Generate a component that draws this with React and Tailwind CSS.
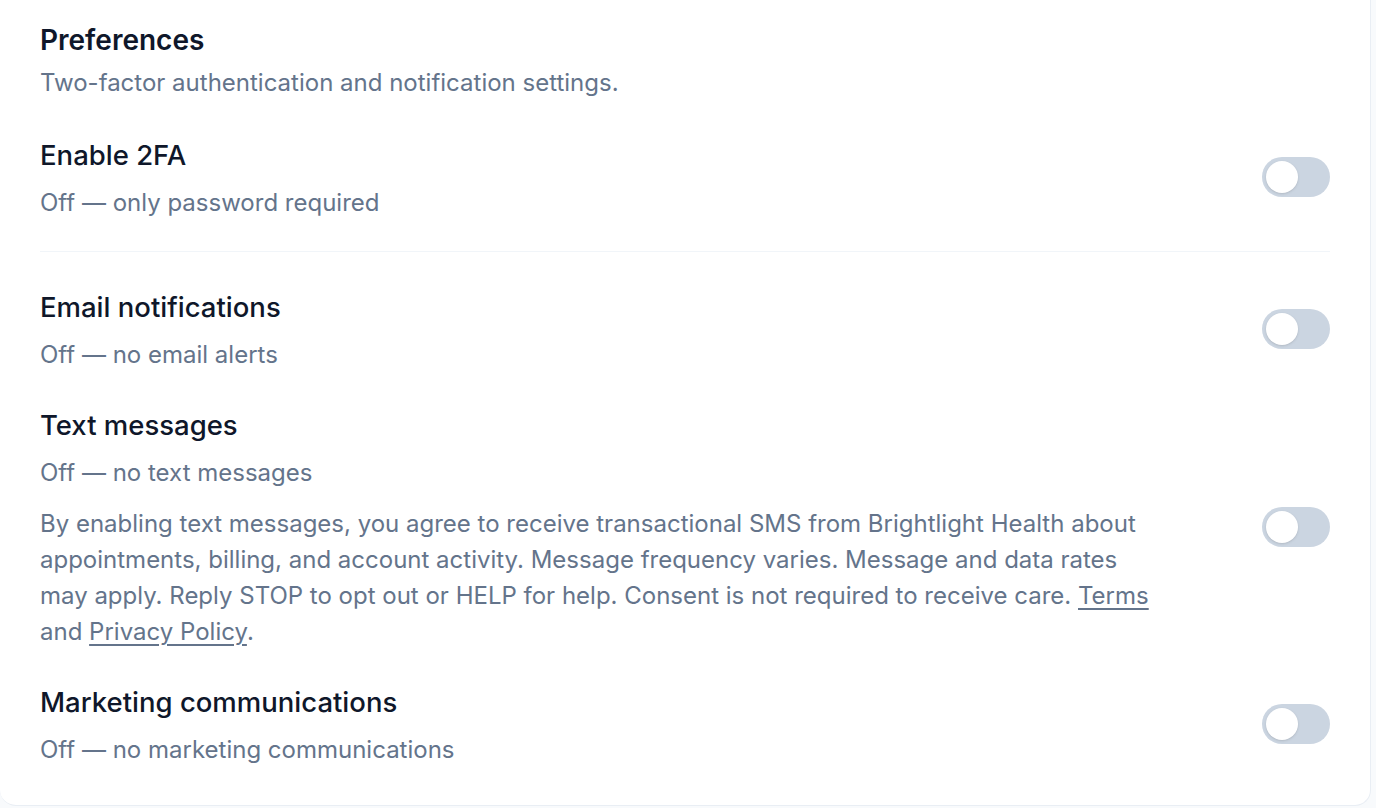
import React, { useState } from "react";

function Toggle({ checked, onChange }) {
  return (
    <button
      type="button"
      role="switch"
      aria-checked={checked}
      onClick={() => onChange(!checked)}
      className={
        "mb-1 flex h-10 w-[68px] shrink-0 items-center rounded-full p-1 transition-colors " +
        (checked ? "bg-blue-600" : "bg-[#cbd5e1]")
      }
    >
      <span
        className={
          "block h-8 w-8 rounded-full bg-white shadow-sm transition-transform " +
          (checked ? "translate-x-7" : "translate-x-0")
        }
      />
    </button>
  );
}

function SettingRow({ title, status, children, checked, onChange }) {
  return (
    <div className="flex items-center justify-between gap-9">
      <div className="min-w-0 flex-1">
        <div className="text-[27.5px] leading-9 font-medium text-[#0f172a]">{title}</div>
        <div className="mt-3 text-[24px] leading-9 text-[#64748b]">{status}</div>
        {children}
      </div>
      <Toggle checked={checked} onChange={onChange} />
    </div>
  );
}

export default function App() {
  const [twoFa, setTwoFa] = useState(false);
  const [email, setEmail] = useState(false);
  const [sms, setSms] = useState(false);
  const [marketing, setMarketing] = useState(false);

  return (
    <div
      className="h-[808px] w-full overflow-hidden bg-[#f8fafc]"
      style={{ fontFamily: "Inter, 'Noto Sans', sans-serif" }}
    >
      <div className="h-[806px] w-[1371px] rounded-b-2xl border-r border-b border-[#e9eef4] bg-white px-10 pt-[22px]">
        <h2 className="text-[28px] leading-9 font-semibold text-[#0f172a]">Preferences</h2>
        <p className="mt-[7px] text-[24px] leading-9 text-[#64748b]">
          Two-factor authentication and notification settings.
        </p>

        <div className="mt-9">
          <SettingRow
            title="Enable 2FA"
            status={twoFa ? "On — code required at sign-in" : "Off — only password required"}
            checked={twoFa}
            onChange={setTwoFa}
          />
        </div>

        <div className="mt-[30px] h-px bg-[#f1f5f9]" />

        <div className="mt-[37px] flex flex-col gap-[34px]">
          <SettingRow
            title="Email notifications"
            status={email ? "On — email alerts enabled" : "Off — no email alerts"}
            checked={email}
            onChange={setEmail}
          />
          <SettingRow
            title="Text messages"
            status={sms ? "On — text messages enabled" : "Off — no text messages"}
            checked={sms}
            onChange={setSms}
          >
            <p className="mt-[15px] max-w-[1115px] text-[24px] leading-9 text-[#64748b]">
              By enabling text messages, you agree to receive transactional SMS from Brightlight
              Health about appointments, billing, and account activity. Message frequency varies.
              Message and data rates may apply. Reply STOP to opt out or HELP for help. Consent is
              not required to receive care.{" "}
              <a href="#" className="underline underline-offset-4">
                Terms
              </a>{" "}
              and{" "}
              <a href="#" className="underline underline-offset-4">
                Privacy Policy
              </a>
              .
            </p>
          </SettingRow>
          <SettingRow
            title="Marketing communications"
            status={marketing ? "On — marketing communications" : "Off — no marketing communications"}
            checked={marketing}
            onChange={setMarketing}
          />
        </div>
      </div>
    </div>
  );
}
